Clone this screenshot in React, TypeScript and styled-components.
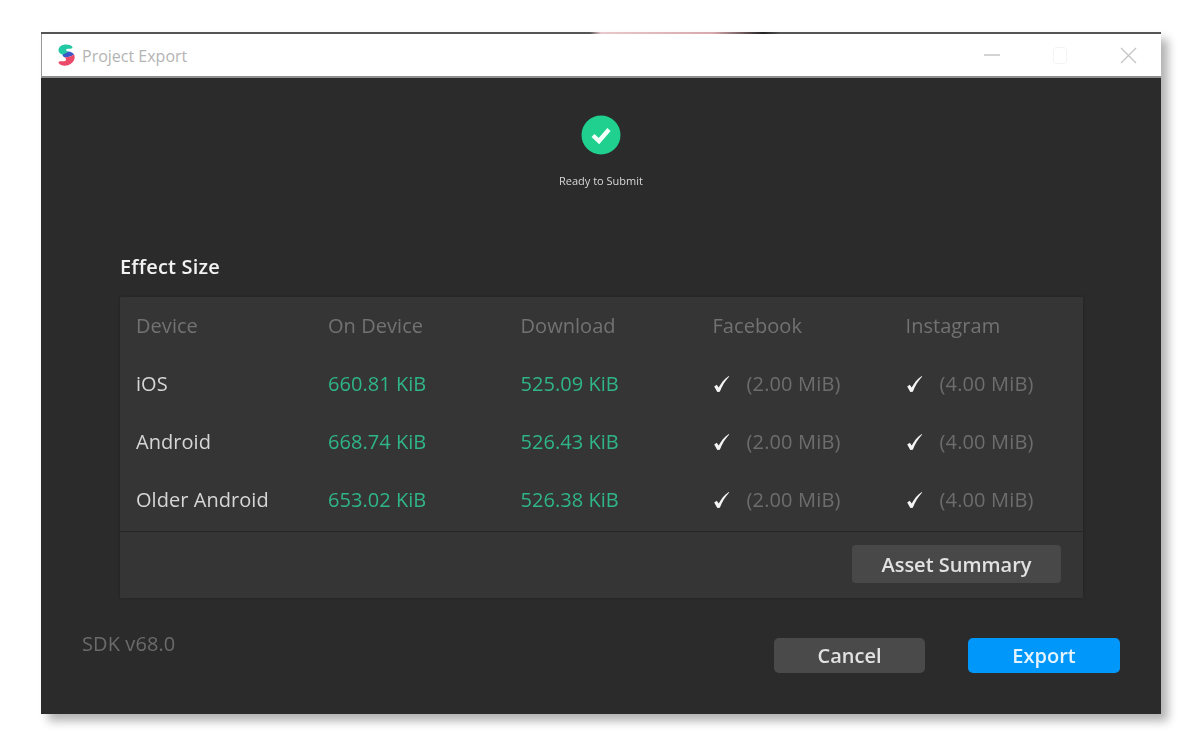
import React from "react";
import styled, { createGlobalStyle } from "styled-components";

const Global = createGlobalStyle`
  html, body { margin: 0; padding: 0; background: #fff; }
  body { font-family: "Open Sans", "Noto Sans", "Liberation Sans", sans-serif; }
`;

const Page = styled.div`
  width: 1202px;
  height: 746px;
  padding: 32px 0 0 41px;
  box-sizing: border-box;
  overflow: hidden;
  background: #fff;
`;

const Window = styled.div`
  width: 1120px;
  height: 682px;
  display: flex;
  flex-direction: column;
  background: #2b2b2b;
  box-shadow: 7px 7px 9px rgba(0, 0, 0, 0.3);
  filter: blur(0.7px);
`;

const TopEdge = styled.div`
  height: 2px;
  flex: none;
  background: linear-gradient(
    90deg,
    #555 0,
    #555 49%,
    #e8c8cc 50%,
    #d8a8ae 60%,
    #222 64.5%,
    #555 66%,
    #555 100%
  );
`;

const TitleBar = styled.div`
  height: 42px;
  flex: none;
  display: flex;
  align-items: center;
  padding: 0 24px 0 15px;
  background: #fff;
  border-left: 1px solid #999;
  border-bottom: 2px solid #8f8f8f;
  box-sizing: content-box;
`;

const Title = styled.span`
  margin-left: 7px;
  padding-top: 2px;
  font-size: 16px;
  color: #b4b4b4;
`;

const WindowControls = styled.div`
  margin-left: auto;
  display: flex;
  align-items: center;
  gap: 53px;
`;

const Body = styled.div`
  flex: 1;
  display: flex;
  flex-direction: column;
  min-height: 0;
  padding: 37px 41px 0 40px;
`;

const Status = styled.div`
  display: flex;
  flex-direction: column;
  align-items: center;
  padding-left: 1px;
`;

const StatusLabel = styled.div`
  margin-top: 19px;
  font-size: 11px;
  line-height: 14px;
  color: #d8d8d8;
`;

const Section = styled.section`
  margin: 66px 0 0 39px;
  width: 963px;
`;

const Heading = styled.h2`
  margin: 0 0 17px;
  font-size: 20px;
  line-height: 26px;
  font-weight: 600;
  letter-spacing: 0.2px;
  color: #f2f2f2;
`;

const Card = styled.div`
  height: 301px;
  display: flex;
  flex-direction: column;
  background: #353535;
  box-shadow: 0 0 3px rgba(0, 0, 0, 0.25);
`;

const Rows = styled.div`
  height: 235px;
  flex: none;
  padding: 0 0 0 16px;
  border-bottom: 1px solid #252525;
  box-sizing: border-box;
  display: grid;
  grid-template-columns: 192px 192.5px 192px 193px 1fr;
  grid-template-rows: 58px 58px 58px 58px;
  align-items: center;
`;

const Cell = styled.div<{ $tone: "head" | "device" | "value" }>`
  font-size: 20px;
  line-height: 28px;
  letter-spacing: 0.05px;
  white-space: nowrap;
  color: ${(p) =>
    p.$tone === "head" ? "#727272" : p.$tone === "device" ? "#d6d6d6" : "#2fb587"};
`;

const LimitCell = styled.div`
  display: flex;
  align-items: center;
`;

const Limit = styled.span`
  margin-left: 17px;
  font-size: 20px;
  line-height: 28px;
  letter-spacing: 0.15px;
  color: #6d6d6d;
  white-space: nowrap;
`;

const CardFooter = styled.div`
  flex: 1;
  display: flex;
  align-items: flex-start;
  justify-content: flex-end;
  padding: 13px 22px 0 0;
`;

const SummaryButton = styled.div`
  width: 209px;
  height: 38px;
  border-radius: 4px;
  background: #484848;
  display: flex;
  align-items: center;
  justify-content: center;
  font-size: 20px;
  font-weight: 600;
  color: #e2e2e2;
`;

const Footer = styled.div`
  margin-top: 40px;
  display: flex;
  align-items: flex-start;
`;

const Sdk = styled.div`
  font-size: 20px;
  line-height: 28px;
  letter-spacing: 0.1px;
  color: #6b6b6b;
  margin-top: -8px;
  margin-left: 1px;
`;

const Actions = styled.div`
  margin-left: auto;
  display: flex;
  gap: 43px;
`;

const ActionButton = styled.div<{ $primary?: boolean }>`
  width: ${(p) => (p.$primary ? "152px" : "151px")};
  height: 35px;
  border-radius: 5px;
  display: flex;
  align-items: center;
  justify-content: center;
  font-size: 20px;
  font-weight: 600;
  background: ${(p) => (p.$primary ? "#0097fb" : "#4a4a4a")};
  color: ${(p) => (p.$primary ? "#e4f4ff" : "#e2e2e2")};
`;

const Logo = () => (
  <svg width="18" height="23" viewBox="0 0 18 23">
    <path d="M1.5 6.5C1.5 2.5 5 0.5 9 0.5c3 0 5.5 .8 6.5 2.5 .3 1 -1 1.8 -3 1.8 -2 0 -3.5 .2 -3.5 1.2 0 .8 1.5 1.2 3.5 1.8L6.5 11C3.5 10 1.5 8.8 1.5 6.5Z" fill="#22c9a4" />
    <path d="M5.5 10.8L12 7.4c2.5 .7 4.5 1.7 5 3.2 -2.5 2 -6.5 3 -9.5 2.6C6.2 12.7 5.6 11.8 5.5 10.8Z" fill="#3a58c8" />
    <path d="M7.5 13.2c3.5 .4 7 -.8 9.5 -2.6 .8 1.2 .9 3 .3 4.7 -1 3.5 -5 6.5 -9.3 6.5 -3 0 -5.5 -1 -6.5 -3 -.3 -1.2 1 -1.6 3 -1.6 2.5 .2 4.5 -.2 4.5 -1.5 0 -1 -.6 -1.8 -1.5 -2.5Z" fill="#ec4a6a" />
  </svg>
);

const CheckCircle = () => (
  <svg width="40" height="40" viewBox="0 0 40 40">
    <ellipse cx="20" cy="20" rx="19.5" ry="19.5" fill="#1fd08f" />
    <path d="M12 20.5L18 26L28 14.5" fill="none" stroke="#f4fffa" strokeWidth="4.4" />
  </svg>
);

const Tick = () => (
  <svg width="17" height="18" viewBox="0 0 17 18">
    <path d="M1.2 11.5L3.8 9.8L5.7 12.6C8 8.4 11 4 15.8 1L16.2 1.5C12 5.8 9.2 11 6.8 16.8L4.3 17Z" fill="#f4f4f4" />
  </svg>
);

const Minimize = () => (
  <svg width="16" height="16" viewBox="0 0 16 16">
    <path d="M0 8H16" stroke="#d4d4d4" strokeWidth="2" />
  </svg>
);
const Maximize = () => (
  <svg width="14" height="17" viewBox="0 0 14 17">
    <rect x="0.5" y="0.5" width="13" height="16" rx="3" fill="none" stroke="#f3f3f3" />
  </svg>
);
const Close = () => (
  <svg width="17" height="17" viewBox="0 0 17 17">
    <path d="M1 1L16 16M16 1L1 16" stroke="#c4c4c4" strokeWidth="1.3" />
  </svg>
);

const devices = [
  { name: "iOS", onDevice: "660.81 KiB", download: "525.09 KiB" },
  { name: "Android", onDevice: "668.74 KiB", download: "526.43 KiB" },
  { name: "Older Android", onDevice: "653.02 KiB", download: "526.38 KiB" },
];

const heads = ["Device", "On Device", "Download", "Facebook", "Instagram"];

export default function App() {
  return (
    <Page>
      <Global />
      <Window>
        <TopEdge />
        <TitleBar>
          <Logo />
          <Title>Project Export</Title>
          <WindowControls>
            <Minimize />
            <Maximize />
            <Close />
          </WindowControls>
        </TitleBar>
        <Body>
          <Status>
            <CheckCircle />
            <StatusLabel>Ready to Submit</StatusLabel>
          </Status>
          <Section>
            <Heading>Effect Size</Heading>
            <Card>
              <Rows>
                {heads.map((h) => (
                  <Cell key={h} $tone="head">{h}</Cell>
                ))}
                {devices.map((d) => (
                  <React.Fragment key={d.name}>
                    <Cell $tone="device">{d.name}</Cell>
                    <Cell $tone="value">{d.onDevice}</Cell>
                    <Cell $tone="value">{d.download}</Cell>
                    <LimitCell><Tick /><Limit>(2.00 MiB)</Limit></LimitCell>
                    <LimitCell><Tick /><Limit>(4.00 MiB)</Limit></LimitCell>
                  </React.Fragment>
                ))}
              </Rows>
              <CardFooter>
                <SummaryButton>Asset Summary</SummaryButton>
              </CardFooter>
            </Card>
          </Section>
          <Footer>
            <Sdk>SDK v68.0</Sdk>
            <Actions>
              <ActionButton>Cancel</ActionButton>
              <ActionButton $primary>Export</ActionButton>
            </Actions>
          </Footer>
        </Body>
      </Window>
    </Page>
  );
}
